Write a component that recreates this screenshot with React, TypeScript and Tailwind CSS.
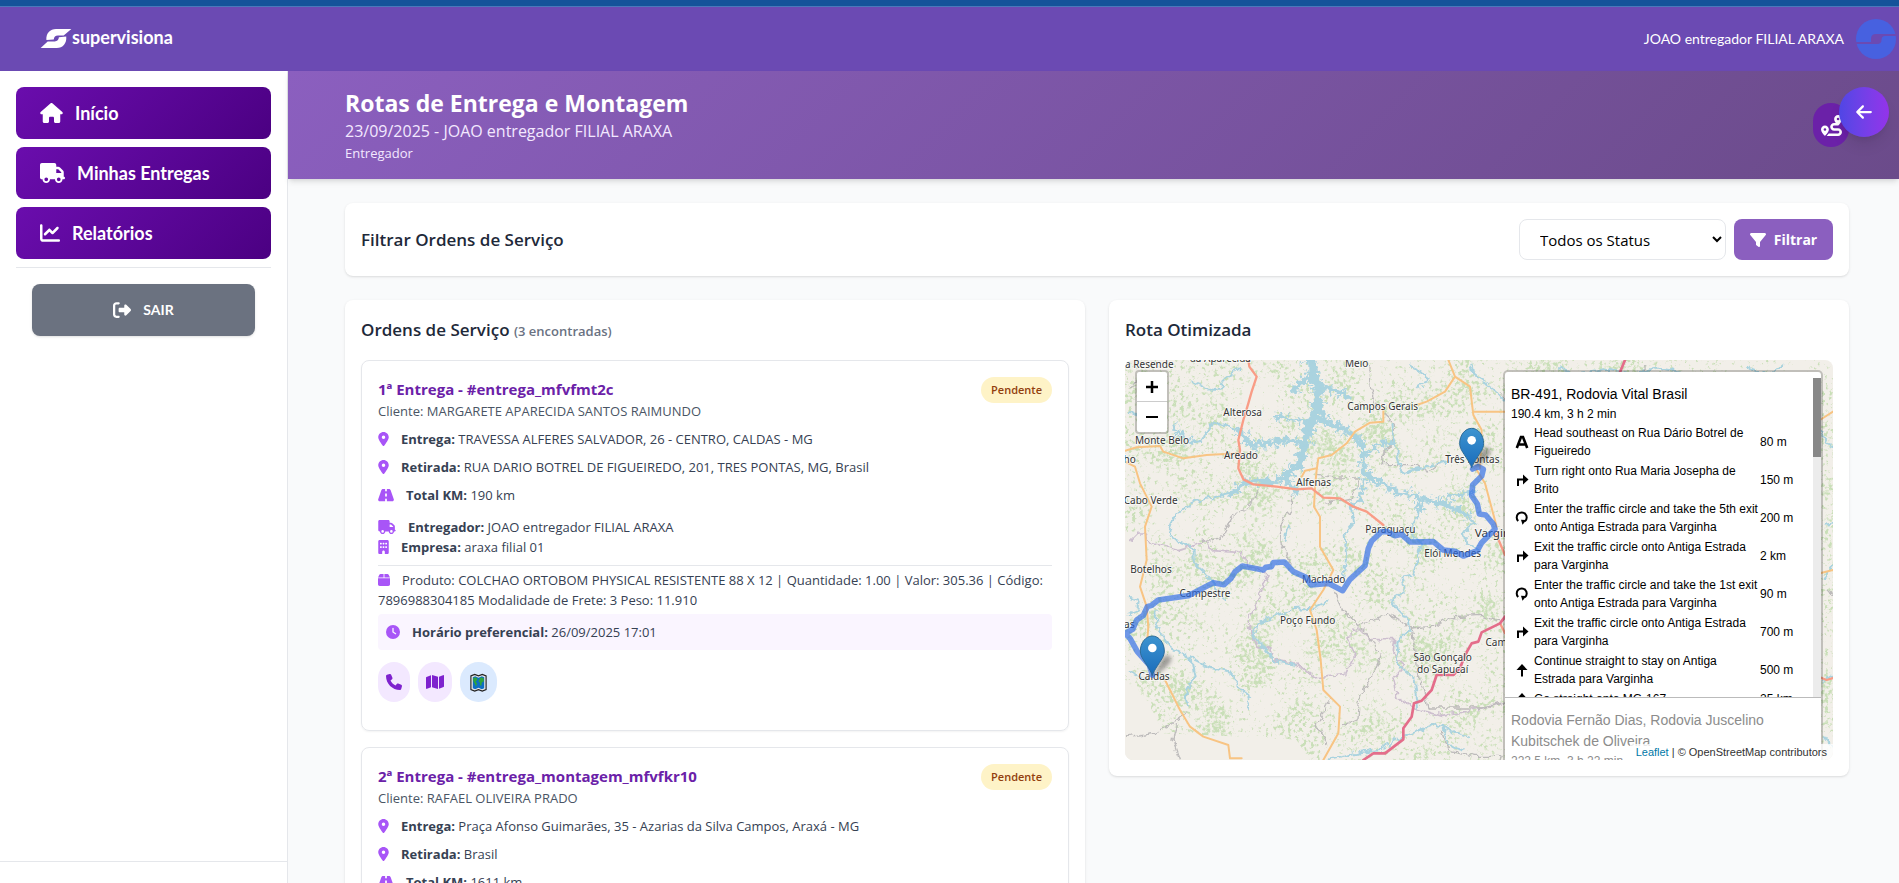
import type { ReactNode } from "react";
import {
  FaArrowLeft, FaBox, FaBuilding, FaChartLine, FaClock, FaFilter, FaHouse,
  FaLocationDot, FaMap, FaPhone, FaRightFromBracket, FaRoad, FaRoute, FaTruck,
} from "react-icons/fa6";

// ─── Data ─────────────────────────────────────────────────────────────────────
const NAV = [
  { href: "#inicio",     label: "Início",          icon: FaHouse,     size: "w-[23px] h-5" },
  { href: "#entregas",   label: "Minhas Entregas", icon: FaTruck,     size: "w-[25px] h-5" },
  { href: "#relatorios", label: "Relatórios",      icon: FaChartLine, size: "w-5 h-5" },
];

const ORDERS = [
  {
    title: "1ª Entrega - #entrega_mfvfmt2c",
    client: "MARGARETE APARECIDA SANTOS RAIMUNDO",
    delivery: "TRAVESSA ALFERES SALVADOR, 26 - CENTRO, CALDAS - MG",
    pickup: "RUA DARIO BOTREL DE FIGUEIREDO, 201, TRES PONTAS, MG, Brasil",
    km: "190 km",
    product:
      "COLCHAO ORTOBOM PHYSICAL RESISTENTE 88 X 12 | Quantidade: 1.00 | Valor: 305.36 | Código: 7896988304185 Modalidade de Frete: 3 Peso: 11.910",
    time: "26/09/2025 17:01",
  },
  {
    title: "2ª Entrega - #entrega_montagem_mfvfkr10",
    client: "RAFAEL OLIVEIRA PRADO",
    delivery: "Praça Afonso Guimarães, 35 - Azarias da Silva Campos, Araxá - MG",
    pickup: "Brasil",
    km: "1611 km",
  },
];

const STEPS = [
  { icon: "start",    text: "Head southeast on Rua Dário Botrel de Figueiredo", dist: "80 m" },
  { icon: "right",    text: "Turn right onto Rua Maria Josepha de Brito", dist: "150 m" },
  { icon: "circle",   text: "Enter the traffic circle and take the 5th exit onto Antiga Estrada para Varginha", dist: "200 m" },
  { icon: "right",    text: "Exit the traffic circle onto Antiga Estrada para Varginha", dist: "2 km" },
  { icon: "circle",   text: "Enter the traffic circle and take the 1st exit onto Antiga Estrada para Varginha", dist: "90 m" },
  { icon: "right",    text: "Exit the traffic circle onto Antiga Estrada para Varginha", dist: "700 m" },
  { icon: "straight", text: "Continue straight to stay on Antiga Estrada para Varginha", dist: "500 m" },
  { icon: "straight", text: "Go straight onto MG-167", dist: "25 km" },
];

// ─── Map drawing ──────────────────────────────────────────────────────────────
const LAKES = [
  { w: 28, d: "M590 50 L592 85 L610 120 L606 200 L580 240 L572 300" },
  { w: 14, d: "M592 85 L560 110 L535 140 M620 125 L660 135 L700 155" },
  { w: 14, d: "M572 290 L500 285 L460 295 L410 300 L370 260" },
  { w: 17, d: "M565 300 L555 360 L520 385 L500 405" },
  { w: 14, d: "M515 390 L470 412 L400 410 L345 447 M500 405 L530 420 L550 445" },
  { w: 15, d: "M610 220 L660 240 L710 262 L745 300 L745 380 L770 400" },
  { w: 8,  d: "M755 325 L790 300 L835 292 M580 232 L530 225 L480 210" },
  { w: 11, d: "M765 398 L800 412 L840 440 L880 448 L925 462 L985 475 L1020 492 L1060 510" },
  { w: 8,  d: "M745 400 L738 460 L705 490 M920 465 L905 520 M985 470 L1010 450 L1080 440" },
  { w: 9,  d: "M175 245 L205 275 L225 292" },
];

const RIVERS = [
  "M45 205 L80 210 M225 292 L260 285 L295 230 L350 250 L385 265",
  "M235 110 L290 135 L320 135 L330 105 L375 70",
  "M345 447 L230 475 L180 515 L165 555 L180 590 L215 595 L240 620 L240 660 L275 690 L300 720 L330 770",
  "M710 490 L715 540 L690 570 L695 640 L685 700",
  "M520 545 L510 585",
  "M640 770 L590 792 L530 797 L430 840 L410 870 L450 910 L480 950 L540 960",
  "M905 520 L885 560 L920 600 L900 690 L860 700 L870 740 L830 765 L880 830 L885 860 L845 890 L850 960 L900 1000 L910 1090",
  "M1055 510 L1085 540 L1050 560 L1055 600 L1090 620",
  "M830 240 L850 330 L865 385 L925 370 L960 360 L1000 350",
  "M890 65 L925 80 L945 110 L910 125 M1070 60 L1075 90 L1130 130 L1185 180",
  "M125 800 L130 850 L170 910 L230 940 L290 970 L350 985 L375 1035 L410 1060 L405 1090",
  "M230 940 L240 1000 L215 1040 L220 1080",
  "M45 980 L100 1010 M45 760 L75 770 L70 800 L45 810",
  "M570 1260 L740 1225 L800 1215 L860 1180 L960 1140 L1060 1175 M985 1145 L1000 1200 L1050 1215",
  "M2080 215 L2110 240 L2140 300 L2169 310 M2130 540 L2169 535 M2130 700 L2169 640 M1330 70 L1380 90 L1480 75 L1560 90 L1620 70 L1700 85",
  "M2130 1010 L2169 985 M2130 1180 L2169 1230 M1900 70 L1960 90 L2010 65",
];

const GREY_ROADS = [
  "M765 60 L770 130 L785 180 L820 215 L840 250 L835 300 L800 330 L805 360 L900 360 L940 385 L985 350",
  "M45 1178 L130 1165 L215 1105 M185 1140 L175 1190 L200 1260",
  "M430 440 L400 490 L350 520 L320 580 L260 590 M530 450 L530 500 L495 540 L500 600 L530 660",
  "M660 740 L690 800 L730 840 L770 890 L800 930 L770 1000 L735 1060 L730 1120 L690 1140",
  "M1185 830 L1100 815 L1000 820 L960 845 L890 850 L820 810 L730 840",
  "M890 850 L910 980 L940 1090 L1100 1090 L1185 1070 M650 1060 L610 1140 L640 1200",
  "M980 1160 L1000 1215 L1080 1235 L1160 1235 L1155 1260 M610 395 L660 400 L740 400 L710 460 L640 475",
  "M45 135 L60 115 L80 105 M1590 60 L1595 97 M1160 145 L1185 175 M2135 740 L2169 760",
];

const BORDERS = [
  "M45 590 L70 565 L95 565 L105 595 L190 615 L280 585 L290 615 L370 620 L400 660 L460 690 L430 770 L400 830 L410 870 L430 905 L465 910 L475 945 L550 960 L600 1000 L690 990 L720 930 L700 880 L730 850 L765 885 L840 885 L835 930 L870 960 L835 1000 L850 1060 L900 1090 L980 1115 L1080 1095 L1185 1070",
];

const ORANGE_ROADS = [
  "M45 332 L80 322 L150 318 L160 335 L220 355 L290 345 L385 340",
  "M45 365 L75 380 L90 430 L125 500 L105 560 L110 660 L90 740 L110 800 L115 860 L110 925",
  "M615 445 L612 500 L630 530 L630 620 L670 690 L640 750 L600 810 L620 870 L632 960 L640 1050 L690 1100 L685 1180 L640 1260",
  "M615 440 L620 390 L625 355 L665 345 L710 310 L735 275 L780 248 L820 245 L820 205",
  "M575 410 L585 392 L620 385",
  "M1015 60 L1035 110 L1005 155 L950 185 L920 195 M1035 110 L1080 140 L1090 225 L1115 270 L1110 385",
  "M1090 215 L1185 215 M1100 390 L1125 430 L1160 560",
  "M165 1020 L190 1070 L210 1110 L240 1160 L280 1190 L355 1215 L360 1255 L395 1255",
  "M2130 240 L2169 215 M2130 700 L2169 690",
];

const LABELS = [
  { x: 118, y: 84,   t: "a Resende" },
  { x: 331, y: 66,   t: "da Aparecida" },
  { x: 740, y: 81,   t: "Meio" },
  { x: 818, y: 210,  t: "Campos Gerais" },
  { x: 398, y: 227,  t: "Alterosa" },
  { x: 156, y: 313,  t: "Monte Belo" },
  { x: 59,  y: 368,  t: "ho" },
  { x: 393, y: 356,  t: "Areado" },
  { x: 611, y: 439,  t: "Alfenas" },
  { x: 1087, y: 368, t: "Três Pontas" },
  { x: 122, y: 492,  t: "Cabo Verde" },
  { x: 841, y: 578,  t: "Paraguaçu" },
  { x: 1028, y: 650, t: "Elói Mendes" },
  { x: 123, y: 698,  t: "Botelhos" },
  { x: 285, y: 770,  t: "Campestre" },
  { x: 641, y: 730,  t: "Machado" },
  { x: 593, y: 852,  t: "Poço Fundo" },
  { x: 998, y: 962,  t: "São Gonçalo" },
  { x: 998, y: 1000, t: "do Sapucaí" },
  { x: 132, y: 1020, t: "Caldas" },
  { x: 1203, y: 917, t: "Campanha" },
];

const ROUTE =
  "M127 1005 L118 975 L82 935 L60 895 L46 880 L68 868 L80 840 L100 826 L112 800 L125 796 L145 780 L235 767 L275 746 L310 728 L342 734 L362 716 L375 695 L397 678 L460 690 L467 682 L484 680 L490 668 L523 666 L550 695 L588 712 L603 735 L655 730 L698 752 L720 718 L765 677 L775 625 L785 603 L815 575 L832 575 L855 587 L875 583 L900 606 L970 605 L1000 630 L1035 634 L1060 648 L1102 632 L1115 608 L1155 567 L1150 552 L1127 525 L1108 522 L1102 492 L1085 467 L1088 435 L1115 408 L1120 388 L1105 380 L1088 387";

function Pin({ x, y }: { x: number; y: number }) {
  return (
    <g transform={`translate(${x} ${y}) scale(3)`}>
      <path d="M1 0 L10 -18 Q16 -24 19 -18 Q20 -12 2 0Z" fill="#000" opacity=".35" filter="url(#soft)" />
      <path
        d="M0 -0.500 C-1.500 -6 -9.500 -16 -11 -20 C-11.800 -22 -12 -23.500 -12 -25 C-12 -33 -6.700 -40 0 -40 C6.700 -40 12 -33 12 -25 C12 -23.500 11.800 -22 11 -20 C9.500 -16 1.500 -6 0 -0.500Z"
        fill="url(#pin)"
        stroke="#2e6c97"
      />
      <circle cx="0" cy="-28" r="4.300" fill="#fff" />
    </g>
  );
}

function RouteMap() {
  return (
    <svg
      viewBox="45 60 2124 1200"
      preserveAspectRatio="xMinYMin slice"
      className="block h-full w-full bg-[#f2efe9] font-['Noto_Sans',sans-serif]"
      aria-label="Mapa da rota"
    >
      <defs>
        <linearGradient id="pin" x1="0" y1="0" x2="0" y2="1">
          <stop offset="0" stopColor="#3d94d0" />
          <stop offset="1" stopColor="#1a6cbb" />
        </linearGradient>
        <filter id="soft" x="-50%" y="-50%" width="200%" height="200%">
          <feGaussianBlur stdDeviation="2" />
        </filter>
        <filter id="woods" x="0" y="0" width="100%" height="100%" colorInterpolationFilters="sRGB">
          <feTurbulence type="fractalNoise" baseFrequency="0.090" numOctaves="3" seed="4" result="fine" />
          <feTurbulence type="fractalNoise" baseFrequency="0.008" numOctaves="2" seed="9" result="wide" />
          <feComposite in="fine" in2="wide" operator="arithmetic" k1="0" k2="0.650" k3="0.350" k4="0" />
          <feColorMatrix values="0 0 0 0 0.790  0 0 0 0 0.875  0 0 0 0 0.720  8 0 0 0 -4.300" />
        </filter>
        <filter id="shore" x="-10%" y="-10%" width="120%" height="120%">
          <feTurbulence type="turbulence" baseFrequency="0.040" numOctaves="2" seed="3" />
          <feDisplacementMap in="SourceGraphic" scale="26" xChannelSelector="R" yChannelSelector="G" />
        </filter>
        <filter id="wobble" x="-5%" y="-5%" width="110%" height="110%">
          <feTurbulence type="turbulence" baseFrequency="0.030" numOctaves="2" seed="7" />
          <feDisplacementMap in="SourceGraphic" scale="22" xChannelSelector="R" yChannelSelector="G" />
        </filter>
      </defs>

      <rect x="45" y="60" width="2124" height="1200" fill="#fff" filter="url(#woods)" />
      <path d="M45 590 L95 570 L105 600 L105 770 L45 860Z M45 1020 L110 1080 L160 1180 L400 1190 L560 1200 L600 1260 L45 1260Z" fill="#f2efe9" />

      <g fill="none" strokeLinejoin="round" strokeLinecap="round">
        <g filter="url(#wobble)" transform="translate(8 8)">
          {BORDERS.map((d) => <path key={d} d={d} stroke="#cdbfcf" strokeWidth="5" />)}
          {GREY_ROADS.map((d) => <path key={d} d={d} stroke="#bdbbbb" strokeWidth="4" />)}
          {RIVERS.map((d) => <path key={d} d={d} stroke="#aad3df" strokeWidth="6" />)}
        </g>
        <g filter="url(#shore)" stroke="#aad3df" transform="translate(9 9)">
          {LAKES.map(({ d, w }) => <path key={d} d={d} strokeWidth={w} />)}
          {LAKES.map(({ d, w }) => (
            <path key={d} d={d} strokeWidth={w + 22} strokeDasharray="4 22 6 31" strokeLinecap="butt" />
          ))}
        </g>
        {ORANGE_ROADS.map((d) => <path key={d} d={d} stroke="#f8c483" strokeWidth="6" />)}
        <path
          d="M415 60 L418 80 L440 110 L425 155 L415 190 L400 240 L385 300 L390 330 L385 385 L400 418 L430 433 L500 440 L560 448 L605 445 L640 473 L690 475 L730 500 L770 515 L820 555 M1155 575 L1170 610 L1185 645 M1170 850 L1185 880 M2130 1012 L2150 1020 L2169 1014"
          stroke="#f99c86"
          strokeWidth="7"
        />
        <path
          d="M1545 60 L1530 97 M1185 830 L1170 850 L1115 877 L1105 905 L1085 910 L1065 945 L1050 985 L1030 1005 L980 1005 L965 1050 L935 1082 L912 1090 L905 1130 L880 1165 L880 1198 L825 1240 L790 1240 L760 1260"
          stroke="#e46d8a"
          strokeWidth="8"
        />
      </g>

      <g textAnchor="middle" fontSize="30" fill="#333" stroke="#fff" strokeOpacity=".7" strokeWidth="5" paintOrder="stroke">
        {LABELS.map(({ x, y, t }) => <text key={t} x={x} y={y}>{t}</text>)}
        <text x="58" y="864" fontSize="32">as</text>
        <text x="1168" y="591" fontSize="35">Varginha</text>
      </g>

      <path d={ROUTE} fill="none" stroke="#2f6de6" strokeOpacity=".68" strokeWidth="17" strokeLinejoin="round" strokeLinecap="round" />
      <Pin x={1085} y={385} />
      <Pin x={127} y={1008} />
    </svg>
  );
}

function StepIcon({ name }: { name: string }) {
  return (
    <svg viewBox="0 0 14 14" className="h-[14px] w-[14px]" fill="none" stroke="#000" strokeWidth="2">
      {name === "start" && <path d="M1.800 13 L6 2 H8 L12.200 13 M3.500 9.500 H10.500" strokeWidth="2.600" />}
      {name === "right" && (
        <>
          <path d="M3 13 V6.500 H9" />
          <path d="M8 1.500 L13.500 6.500 L8 11.500Z" fill="#000" stroke="none" />
        </>
      )}
      {name === "circle" && (
        <>
          <path d="M3.200 10 A5 5 0 1 1 10 10.200" />
          <path d="M6 8.800 L11.500 9 L7.500 13.800Z" fill="#000" stroke="none" />
        </>
      )}
      {name === "straight" && (
        <>
          <path d="M7 13.500 V4" />
          <path d="M1.500 7 L7 1 L12.500 7Z" fill="#000" stroke="none" />
        </>
      )}
    </svg>
  );
}

function Directions() {
  return (
    <div className="absolute top-[10px] right-[10px] w-[320px] rounded-[5px] border-2 border-black/20 bg-white bg-clip-padding font-['Liberation_Sans',Arial,sans-serif] text-xs leading-[18px] text-black">
      <div className="relative h-[326px] overflow-hidden border-b border-[#bbb] px-[6px] pt-3">
        <h3 className="text-sm leading-[21px]">BR-491, Rodovia Vital Brasil</h3>
        <p>190.4 km, 3 h 2 min</p>
        <table className="border-collapse">
          <tbody>
            {STEPS.map(({ icon, text, dist }, i) => (
              <tr key={i}>
                <td className="w-[23px] pl-1 align-middle"><StepIcon name={icon} /></td>
                <td className="w-[225px] py-px">{text}</td>
                <td className="w-12 whitespace-nowrap pl-px align-middle">{dist}</td>
              </tr>
            ))}
          </tbody>
        </table>
        <div className="absolute top-[6px] right-0 bottom-0 w-2 bg-[#ececec]">
          <div className="h-[79px] bg-[#888]" />
        </div>
      </div>
      <div className="px-[6px] pt-3 pb-3 text-[#8c8c8c]">
        <h3 className="text-sm leading-[21px]">Rodovia Fernão Dias, Rodovia Juscelino Kubitschek de Oliveira</h3>
        <p>222.5 km, 3 h 22 min</p>
      </div>
    </div>
  );
}

// ─── Header ───────────────────────────────────────────────────────────────────
function Header() {
  return (
    <header className="flex h-[71px] shrink-0 items-center justify-between border-t-[6px] border-[#14539a] bg-[#6b4ab3] pr-[3px] pl-10 font-[Lato,sans-serif] text-white shadow-[inset_0_1px_0_#4a78bb]">
      <a href="#inicio" className="flex items-center" aria-label="supervisiona">
        <svg viewBox="118 85 100 64" className="h-[21px] w-8" fill="#fff">
          <path d="M138 122 C136 100 150 87 168 87 H216 L192 108 H174 Q162 109 161 120 Z" />
          <path d="M120 147 L142 126 H164 Q176 125 177 113 L200 111 C202 132 190 147 170 147 Z" />
        </svg>
        <span className="-mt-1 text-lg leading-6 font-bold">supervisiona</span>
      </a>
      <div className="flex items-center gap-3">
        <span className="text-sm">JOAO entregador FILIAL ARAXA</span>
        <svg viewBox="0 0 40 40" className="h-10 w-10">
          <circle cx="20" cy="20" r="20" fill="#4761e0" />
          <path d="M40 15 H20 Q15 15 15 20 V23 H0 V25 H21 Q25.500 25 25.500 21 Q25.500 17 29 17 H40Z" fill="#6b4ab3" />
        </svg>
      </div>
    </header>
  );
}

// ─── Sidebar ──────────────────────────────────────────────────────────────────
function Sidebar() {
  return (
    <aside className="flex h-screen w-72 shrink-0 flex-col border-r border-gray-200 bg-white font-[Lato,sans-serif]">
      <nav className="flex-1 p-4">
        <ul className="space-y-2 border-b border-gray-200 pb-2">
          {NAV.map(({ href, label, icon: Icon, size }) => (
            <li key={href}>
              <a
                href={href}
                className="flex h-[52px] items-center gap-3 rounded-lg bg-[linear-gradient(135deg,#6a0dad,#4b0082)] px-6 text-lg font-bold text-white"
              >
                <Icon className={size} />
                {label}
              </a>
            </li>
          ))}
        </ul>
        <div className="px-4 pt-4">
          <button className="flex h-[52px] w-full items-center justify-center gap-3 rounded-lg bg-[#6b7280] text-sm font-bold text-white shadow-sm">
            <FaRightFromBracket className="h-[18px] w-[18px]" />
            SAIR
          </button>
        </div>
      </nav>
      <div className="h-[93px] border-t border-gray-200 pt-4 text-center text-sm text-gray-500">v1.0.0</div>
    </aside>
  );
}

// ─── Orders ───────────────────────────────────────────────────────────────────
function Field({ icon, label, children }: { icon: ReactNode; label: string; children: ReactNode }) {
  return (
    <p className="flex items-center gap-3">
      <span className="text-[#a855f7]">{icon}</span>
      <span><strong>{label}:</strong> {children}</span>
    </p>
  );
}

function WorldMapIcon() {
  return (
    <svg viewBox="0 0 20 20" className="h-[19px] w-[21px]">
      <path d="M2 3 L6 1.500 L10 3 L14 1.500 L18 3 V17.500 L14 19 L10 17.500 L6 19 L2 17.500Z" fill="#e8e8e8" stroke="#222" strokeWidth="1.200" />
      <path d="M4 4.500 L6.500 3.500 L10 5 L13.500 3.500 L16 4.500 V16 L13.500 17 L10 15.500 L6.500 17 L4 16Z" fill="#0d6fc4" />
      <path d="M4.500 5 L8 4.800 L9 7 L7 9 L8.500 11 L7.500 14.500 L6 11 L4.500 8.500Z M10.500 7 L12.500 4.500 L15.500 5.500 V9 L13.500 10 L13 13.500 L11.500 13 L11.500 10 L10 9Z" fill="#2ea43c" />
    </svg>
  );
}

function OrderCard({ order }: { order: (typeof ORDERS)[number] }) {
  return (
    <article className="rounded-lg border border-gray-200 p-4 text-[13px] leading-5 text-gray-700 shadow-xs">
      <div className="flex items-start justify-between">
        <div>
          <h3 className="text-[15px] leading-6 font-bold text-[#6b21a8]">{order.title}</h3>
          <p className="text-gray-600">Cliente: {order.client}</p>
        </div>
        <span className="rounded-full bg-[#fef3c7] px-[10px] py-[5px] text-[11px] leading-4 font-semibold text-[#92400e]">
          Pendente
        </span>
      </div>
      <div className="mt-2 space-y-2">
        <Field icon={<FaLocationDot className="h-[14px] w-[11px]" />} label="Entrega">{order.delivery}</Field>
        <Field icon={<FaLocationDot className="h-[14px] w-[11px]" />} label="Retirada">{order.pickup}</Field>
        <Field icon={<FaRoad className="h-[14px] w-4" />} label="Total KM">{order.km}</Field>
      </div>
      <div className="mt-3">
        <Field icon={<FaTruck className="h-[14px] w-[18px]" />} label="Entregador">JOAO entregador FILIAL ARAXA</Field>
        <Field icon={<FaBuilding className="h-[14px] w-[11px]" />} label="Empresa">araxa filial 01</Field>
      </div>
      {order.product && (
        <p className="mt-2 border-t border-gray-200 pt-1">
          <FaBox className="mr-3 inline h-[14px] w-3 align-[-2px] text-[#a855f7]" />
          {`Produto: ${order.product}`}
        </p>
      )}
      {order.time && (
        <div className="mt-1 rounded-sm bg-[#faf5ff] p-2">
          <Field icon={<FaClock className="h-[14px] w-[14px]" />} label="Horário preferencial">{order.time}</Field>
        </div>
      )}
      <div className="mt-3 mb-3 flex gap-2">
        <button className="flex h-10 items-center rounded-full bg-[#f3e8ff] px-2 text-[#7e22ce]" aria-label="Ligar">
          <FaPhone className="h-4 w-4" />
        </button>
        <button className="flex h-10 items-center rounded-full bg-[#f3e8ff] px-2 text-[#7e22ce]" aria-label="Abrir mapa">
          <FaMap className="h-4 w-[18px]" />
        </button>
        <button className="flex h-10 items-center rounded-full bg-blue-100 px-2" aria-label="Ver rota">
          <WorldMapIcon />
        </button>
      </div>
    </article>
  );
}

// ─── Page ─────────────────────────────────────────────────────────────────────
export default function App() {
  return (
    <div className="flex h-screen flex-col overflow-hidden bg-gray-50 font-['Open_Sans','Noto_Sans',sans-serif]">
      <Header />
      <div className="flex min-h-0 flex-1">
        <Sidebar />
        <main className="min-w-0 flex-1">
          <div className="flex items-center justify-between bg-[linear-gradient(135deg,#8b5fbf,#6b4b8a)] py-4 pr-[50px] pl-[57px] text-white shadow-md">
            <div>
              <h1 className="text-[23px] leading-8 font-bold">Rotas de Entrega e Montagem</h1>
              <p className="text-base leading-6 text-[#f3e8ff]">23/09/2025 - JOAO entregador FILIAL ARAXA</p>
              <p className="text-[13px] leading-5 text-[#f3e8ff]">Entregador</p>
            </div>
            <div className="relative">
              <div className="flex h-11 w-9 items-center justify-center rounded-full bg-[#6b21a8]">
                <FaRoute className="h-[21px] w-[21px]" />
              </div>
              <button
                aria-label="Voltar"
                className="absolute -top-4 -right-10 flex h-[50px] w-[50px] items-center justify-center rounded-full bg-linear-to-r from-[#4f46e5] to-[#9333ea] shadow-lg"
              >
                <FaArrowLeft className="h-[18px] w-[18px]" />
              </button>
            </div>
          </div>

          <div className="space-y-6 pt-6 pr-[50px] pl-[57px]">
            <section className="flex items-center justify-between rounded-lg bg-white p-4 shadow-sm">
              <h2 className="text-[17px] leading-7 font-semibold text-gray-800">Filtrar Ordens de Serviço</h2>
              <form className="flex gap-2" onSubmit={(e) => e.preventDefault()}>
                <select
                  aria-label="Status"
                  className="h-[41px] w-[207px] rounded-lg border border-gray-200 bg-white pl-4 text-[15px] text-black"
                >
                  <option>Todos os Status</option>
                  <option>Pendente</option>
                </select>
                <button className="flex h-[41px] w-[99px] items-center justify-center gap-2 rounded-lg bg-[#8b5fbf] text-sm font-bold text-white">
                  <FaFilter className="h-4 w-4" />
                  Filtrar
                </button>
              </form>
            </section>

            <div className="grid grid-cols-2 items-start gap-6">
              <section className="rounded-lg bg-white p-4 shadow-sm">
                <h2 className="mb-4 text-[17px] leading-7 font-semibold text-gray-800">
                  Ordens de Serviço <span className="text-[13px] leading-none text-gray-500">(3 encontradas)</span>
                </h2>
                <div className="space-y-4">
                  {ORDERS.map((order) => <OrderCard key={order.title} order={order} />)}
                </div>
              </section>

              <section className="rounded-lg bg-white p-4 shadow-sm">
                <h2 className="mb-4 text-[17px] leading-7 font-semibold text-gray-800">Rota Otimizada</h2>
                <div className="relative h-[400px] overflow-hidden rounded-lg">
                  <RouteMap />
                  <div className="absolute top-[10px] left-[10px] flex w-[34px] flex-col rounded-sm border-2 border-black/20 bg-white bg-clip-padding">
                    <button aria-label="Aproximar" className="flex h-[30px] items-center justify-center border-b border-[#ccc]">
                      <svg viewBox="0 0 14 14" className="h-[14px] w-[14px]" stroke="#000" strokeWidth="2.500"><path d="M1 7 H13 M7 1 V13" /></svg>
                    </button>
                    <button aria-label="Afastar" className="flex h-[30px] items-center justify-center">
                      <svg viewBox="0 0 14 14" className="h-[14px] w-[14px]" stroke="#000" strokeWidth="2.200"><path d="M1 7 H13" /></svg>
                    </button>
                  </div>
                  <Directions />
                  <div className="absolute right-0 bottom-0 bg-white/80 px-[6px] font-['Liberation_Sans',Arial,sans-serif] text-[11px] leading-4 text-[#333]">
                    <a href="#leaflet" className="text-[#0078a8]">Leaflet</a> | © OpenStreetMap contributors
                  </div>
                </div>
              </section>
            </div>
          </div>
        </main>
      </div>
    </div>
  );
}
